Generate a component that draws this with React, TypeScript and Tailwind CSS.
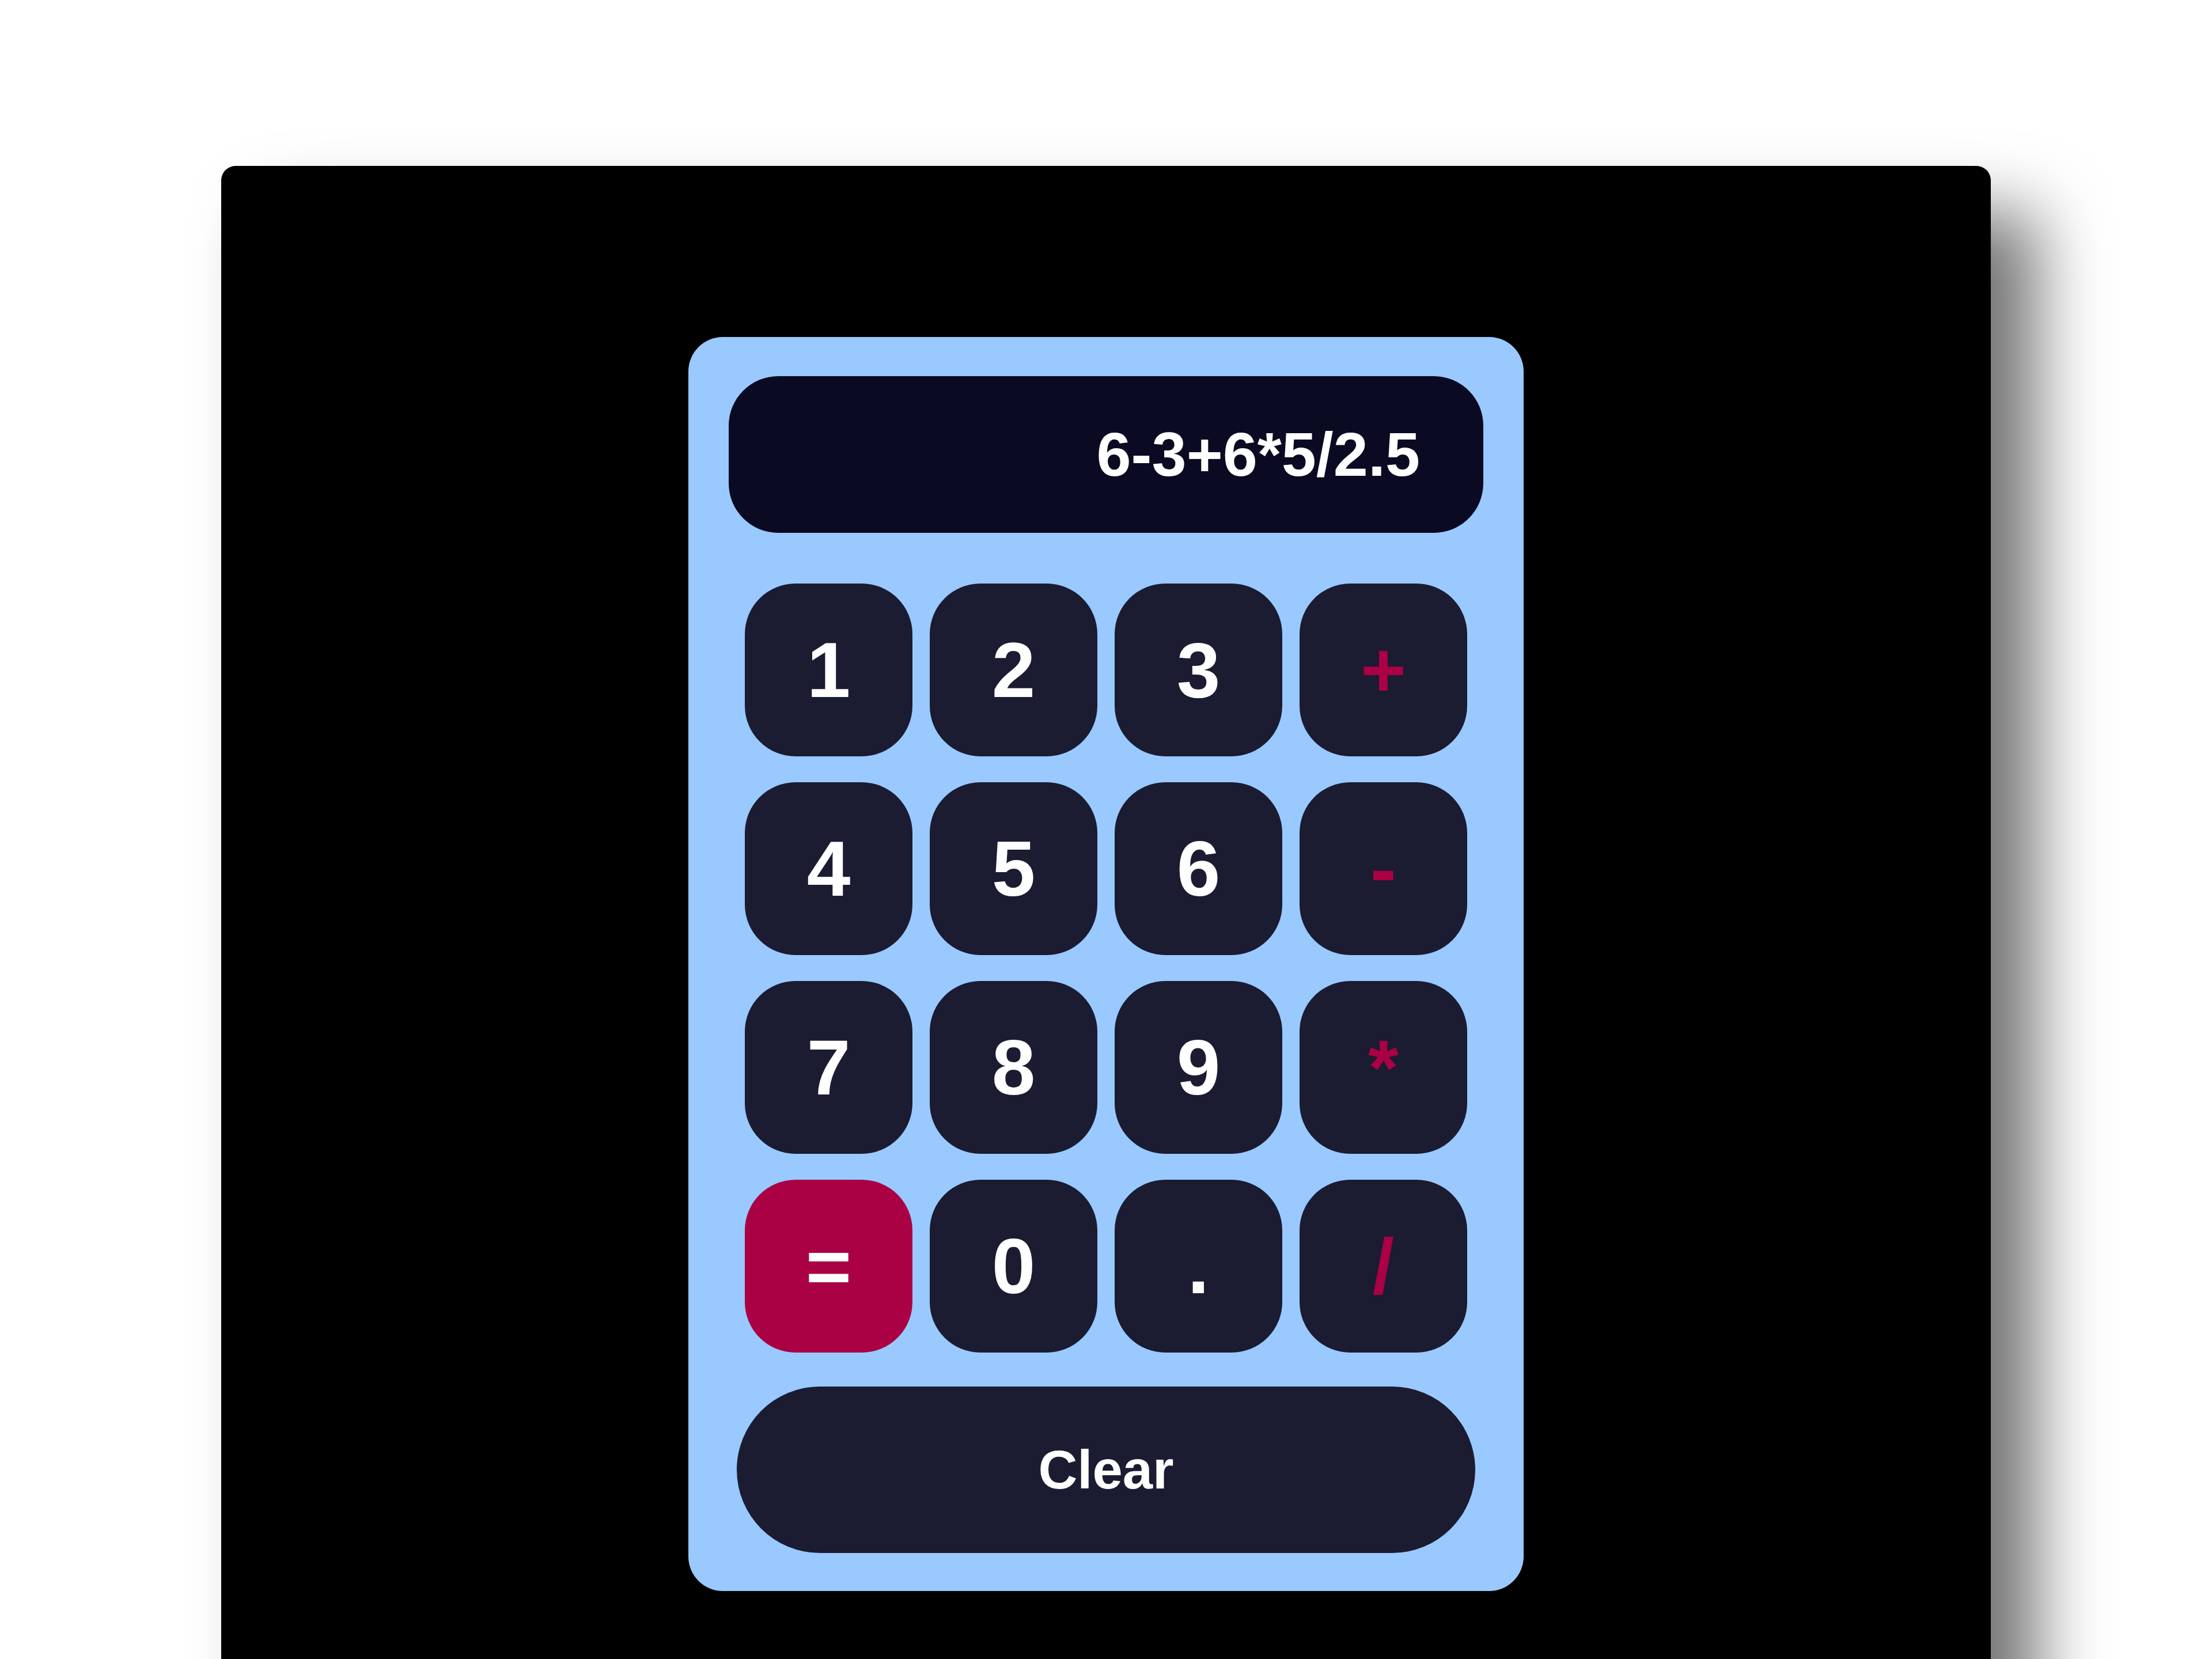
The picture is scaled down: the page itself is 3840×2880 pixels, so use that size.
import React from "react";

type Key = { label: string; kind: "num" | "op" | "eq" };

const keys: Key[] = [
  { label: "1", kind: "num" },
  { label: "2", kind: "num" },
  { label: "3", kind: "num" },
  { label: "+", kind: "op" },
  { label: "4", kind: "num" },
  { label: "5", kind: "num" },
  { label: "6", kind: "num" },
  { label: "-", kind: "op" },
  { label: "7", kind: "num" },
  { label: "8", kind: "num" },
  { label: "9", kind: "num" },
  { label: "*", kind: "op" },
  { label: "=", kind: "eq" },
  { label: "0", kind: "num" },
  { label: ".", kind: "num" },
  { label: "/", kind: "op" },
];

function KeyButton({ k }: { k: Key }) {
  const base =
    "h-[300px] rounded-[88px] flex items-center justify-center font-bold leading-none text-[136px]";
  const tone =
    k.kind === "eq"
      ? " bg-[#aa0044] text-white"
      : k.kind === "op"
      ? " bg-[#1b1b32] text-[#aa0044]"
      : " bg-[#1b1b32] text-white";
  return <button className={base + tone}>{k.label}</button>;
}

export default function App() {
  return (
    <div className="min-h-screen bg-white pt-[288px] [font-family:'Liberation_Sans',Arial,sans-serif]">
      <div className="mx-auto w-[3072px] h-[2700px] bg-black rounded-[25px] shadow-[80px_80px_120px_rgba(0,0,0,0.55)] pt-[297px]">
        <div className="mx-auto w-[1450px] rounded-[60px] bg-[#99c9ff] pt-[68px] pb-[66px] px-[70px]">
          <div className="h-[272px] rounded-[86px] bg-[#0a0a23] flex items-center justify-end pr-[110px] text-white font-bold text-[108px] leading-none">
            6-3+6*5/2.5
          </div>
          <div className="mt-[88px] mx-auto w-[1254px] grid grid-cols-4 gap-x-[30px] gap-y-[45px]">
            {keys.map((k) => (
              <KeyButton key={k.label} k={k} />
            ))}
          </div>
          <button className="mt-[59px] mx-auto flex items-center justify-center w-[1282px] h-[289px] rounded-full bg-[#1b1b32] text-white font-bold text-[94px] leading-none">
            Clear
          </button>
        </div>
      </div>
    </div>
  );
}
